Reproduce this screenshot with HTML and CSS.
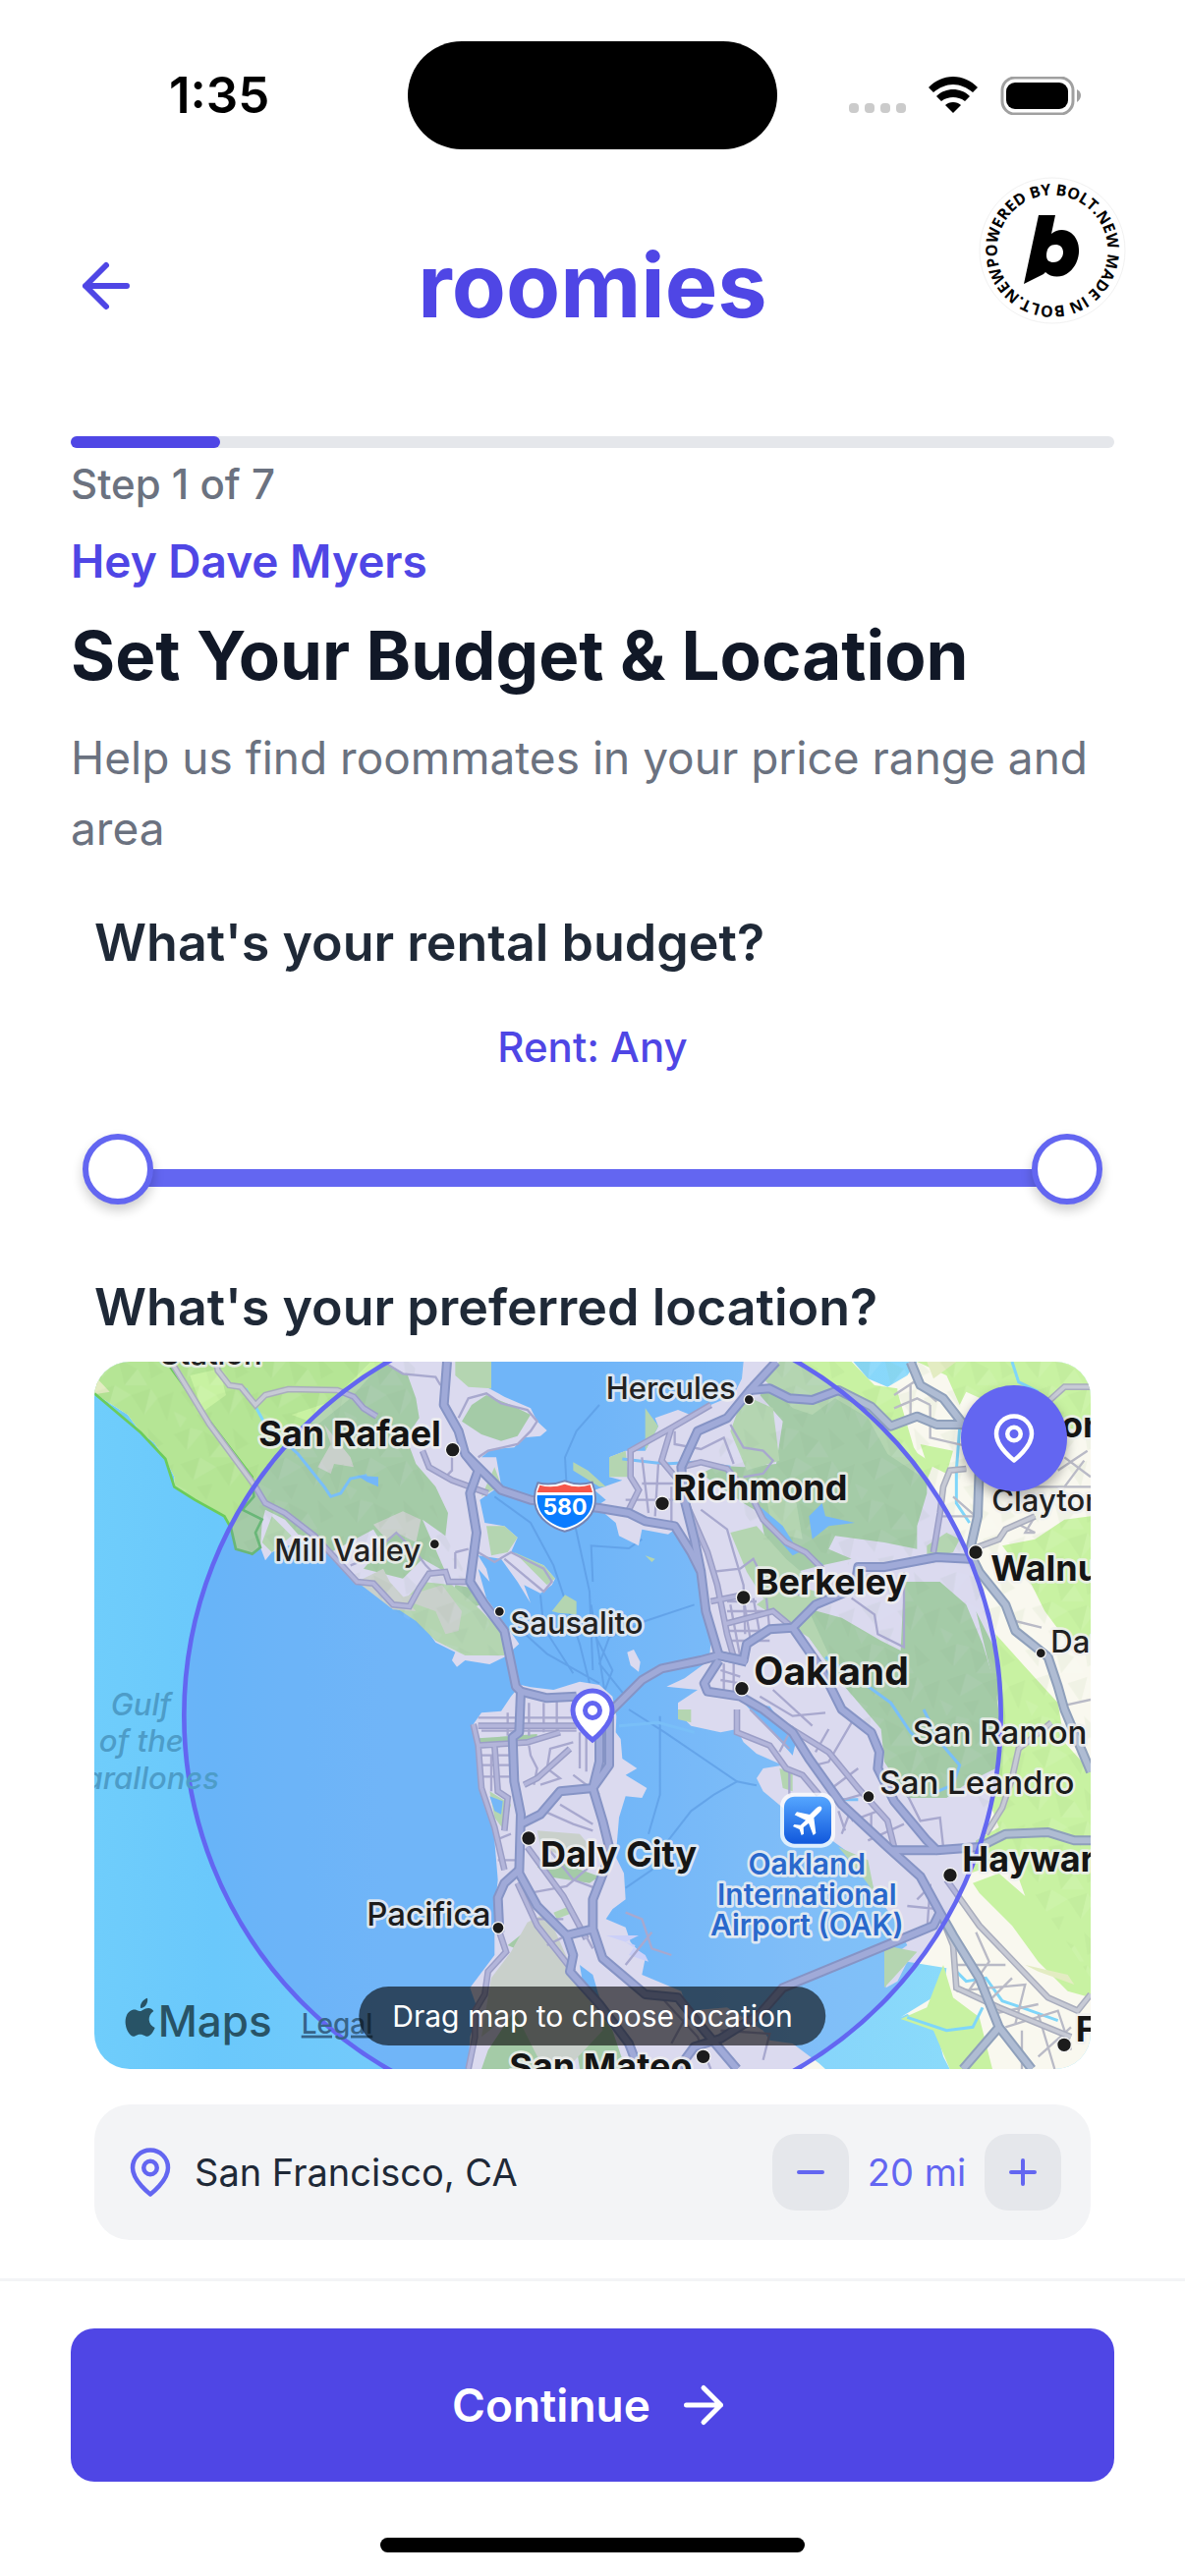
FILE: index.html
```html
<!DOCTYPE html>
<html lang="en">
<head>
    <meta charset="utf-8">
    <title>roomies</title>
    <link rel="stylesheet" href="styles.css">
</head>
<body>
    <div class="status-bar">
        <div class="time">1:35</div>
        <div class="island"></div>
        <div class="status-icons">
            <svg width="58" height="38" viewBox="0 0 58 38" fill="#cbcbcb">
                <rect x="0" y="27" width="10" height="10" rx="4"/>
                <rect x="16" y="27" width="10" height="10" rx="4"/>
                <rect x="32" y="27" width="10" height="10" rx="4"/>
                <rect x="48" y="27" width="10" height="10" rx="4"/>
            </svg>
            <svg width="52" height="38" viewBox="0 0 52 38" fill="#000">
                <path d="M26 0C36 0 44 4 51 11L46 16C40 11 33 8 26 8S12 11 6 16L1 11C8 4 16 0 26 0Z"/>
                <path d="M26 13C32 13 38 15 43 20L38 25C34 22 30 21 26 21S18 22 14 25L9 20C14 15 20 13 26 13Z"/>
                <path d="M26 26C29 26 32 27 34 29L26 37 18 29C20 27 23 26 26 26Z"/>
            </svg>
            <svg width="82" height="39" viewBox="0 0 82 39">
                <rect x="2" y="1" width="72" height="37" rx="13" fill="none" stroke="#a0a0a0" stroke-width="3"/>
                <rect x="6" y="6" width="63" height="27" rx="9" fill="#000"/>
                <path d="M78 13Q82 15 82 19T78 26Z" fill="#a0a0a0"/>
            </svg>
        </div>
    </div>

    <header class="header">
        <button class="back-button" aria-label="Back">
            <svg width="72" height="72" viewBox="0 0 24 24" fill="none" stroke="currentColor" stroke-width="2" stroke-linecap="round" stroke-linejoin="round">
                <path d="M12 19l-7-7 7-7M19 12H5"/>
            </svg>
        </button>
        <div class="logo">roomies</div>
        <a class="bolt-badge" href="#" aria-label="Powered by bolt.new">
            <svg width="150" height="150" viewBox="0 0 150 150">
                <circle cx="75" cy="75" r="74" fill="#fff" stroke="#f1f1f1"/>
                <path id="ring" fill="none" d="M21 91A56 56 0 1 1 129 59A56 56 0 1 1 21 91"/>
                <text class="bolt-text"><textPath href="#ring">POWERED BY BOLT.NEW MADE IN BOLT.NEW</textPath></text>
                <path d="M61 39H78L74 58C80 53 88 53 94 57C106 66 104 88 92 97C85 103 74 103 68 97L66 99 46 109ZM78 69C71 69 69 75 69 80C69 85 72 87 76 87C82 87 86 82 86 77C86 72 83 69 78 69Z" fill="#000" fill-rule="evenodd"/>
            </svg>
        </a>
    </header>

    <main class="content">
        <div class="progress"><div class="progress-fill"></div></div>
        <p class="step">Step 1 of 7</p>
        <p class="greeting">Hey Dave Myers</p>
        <h1 class="title">Set Your Budget &amp; Location</h1>
        <p class="subtitle">Help us find roommates in your price range and area</p>

        <section class="section">
            <h2 class="question">What's your rental budget?</h2>
            <p class="rent">Rent: Any</p>
            <div class="slider">
                <div class="slider-track"></div>
                <input type="range" class="slider-input" id="minRent" aria-label="Minimum rent" min="0" max="100" value="0">
                <input type="range" class="slider-input" id="maxRent" aria-label="Maximum rent" min="0" max="100" value="100">
            </div>

            <h2 class="question">What's your preferred location?</h2>
            <div class="map">
                <svg class="map-canvas" viewBox="18 18 3042 2160" preserveAspectRatio="xMidYMid slice">
                    <defs>
                        <linearGradient id="sea" x1="0" y1="0" x2="1" y2="0">
                            <stop offset="0" stop-color="#6fcdfb"/>
                            <stop offset=".12" stop-color="#6ac8fb"/>
                            <stop offset=".3" stop-color="#74cafb"/>
                            <stop offset=".5" stop-color="#74cafb"/>
                            <stop offset=".7" stop-color="#86d4fb"/>
                            <stop offset="1" stop-color="#8ee0fa"/>
                        </linearGradient>
                        <linearGradient id="air" x1="0" y1="0" x2="0" y2="1">
                            <stop offset="0" stop-color="#55a6ff"/>
                            <stop offset="1" stop-color="#1158dc"/>
                        </linearGradient>
                        <pattern id="relief" width="260" height="220" patternUnits="userSpaceOnUse">
                            <path d="M0 20L50 0 40 70ZM90 10L150 40 110 90ZM180 0L230 50 190 70ZM20 110L80 90 60 160ZM130 120L190 100 170 180ZM210 130L260 110 240 200ZM70 180L120 170 100 220Z" fill="#7fae6a" opacity=".07"/>
                            <path d="M50 0L90 10 40 70ZM150 40L180 90 110 90ZM80 90L130 120 60 160ZM190 100L210 130 170 180ZM0 170L40 190 20 220Z" fill="#fff" opacity=".08"/>
                        </pattern>
                        <path id="marin" d="M18 18V115L120 180 160 235 200 265 235 315 262 370V400L300 415 325 440 365 455 415 490 435 525 450 590 500 605 525 585 540 625 560 600 610 580 680 560 740 610 800 680 850 700 925 770 985 785 1020 820 1060 875 1120 905 1110 930 1125 950 1150 930 1225 942 1270 920 1315 880 1280 830 1215 740 1190 650 1225 690 1215 650 1190 610 1260 620 1310 690 1350 755 1330 700 1380 725 1415 700 1425 680 1390 640 1290 600 1310 555 1270 520 1210 510 1195 440 1260 395 1245 310 1200 310 1230 285 1300 280 1330 250 1380 245 1400 228 1370 200 1350 160 1270 125 1215 95 1160 90 1230 100V18Z"/>
                        <path id="peninsula" d="M1175 1125L1200 1090 1260 1085 1290 1040 1320 1005 1350 1012 1420 1020 1500 995 1560 1005 1600 1040 1612 1100 1610 1150 1625 1170 1630 1230 1675 1260 1640 1280 1705 1320 1690 1350 1640 1345 1620 1410 1610 1530 1635 1580 1640 1660 1600 1690 1580 1720 1640 1745 1655 1790 1700 1840 1690 1890 1810 1940 1830 2000 1950 1990 2060 2060 2080 2090 2150 2100 2230 2160 2250 2178H1160L1165 2080 1190 2000 1165 1930 1240 1830V1700L1250 1600 1240 1480 1225 1380 1200 1300 1190 1200Z"/>
                        <path id="eastbay" d="M2000 18L1995 70 1970 120 1900 150 1850 185 1800 165 1730 190 1740 215 1700 290 1640 290 1590 310V370L1630 380 1545 410 1580 440 1550 460 1610 510 1620 550 1680 580 1690 530 1770 545 1790 530 1860 640 1875 740 1900 880 1895 930 1820 985 1765 1010 1860 1020 1800 1060V1090L1840 1130 1930 1150 1980 1140 2000 1180 2040 1215 2120 1250 2060 1260 2040 1290 2060 1330 2120 1380 2270 1480 2380 1560 2400 1640 2460 1720 2500 1800 2430 1850 2435 1930 2470 1910 2500 1850 2620 1870 2610 1940 2480 2020 2500 2010 2590 2060 2610 2140 2630 2178H3060V18H2530L2500 60 2440 95 2380 70 2335 18Z"/>
                        <g id="highways" fill="none">
                            <path d="M1095 18L1085 150 1130 230 1150 300 1190 350 1165 420 1185 540 1165 690 1210 760 1270 840 1305 1010 1320 1025 1315 1150 1295 1165 1300 1300 1320 1400 1315 1580 1370 1680 1460 1770 1480 1830 1470 1880 1560 1980 1650 2100 1680 2178"/>
                            <path d="M1150 300L1260 410 1350 440 1560 465 1650 480 1700 505 1790 520 1840 600 1870 660 1885 780 1925 915"/>
                            <path d="M2100 18L2020 105 1950 190 1860 230 1810 340 1820 440 1850 560 1870 660"/>
                            <path d="M1570 1110L1690 990 1750 955 1870 930 1925 915 2010 935"/>
                            <path d="M1925 915L2000 930 2010 880 2080 835 2150 830 2240 960 2300 1080 2390 1150 2415 1210 2410 1260 2460 1360 2560 1480 2590 1510 2720 1500 2800 1460 2930 1455 3010 1480H3060"/>
                            <path d="M1925 930L1880 1000 1890 1025 1990 1040 2060 1080 2150 1150 2200 1230 2300 1370 2440 1500 2540 1590 2600 1700 2640 1770 2720 1900 2780 2050 2880 2178"/>
                            <path d="M2150 830L2220 760 2340 710 2350 645 2430 645 2590 615 2690 620M2450 1510H2590"/>
                            <path d="M2510 18L2540 90 2610 130 2680 220 2720 350 2715 490 2690 600 2720 660 2800 760 2830 840 2930 920 2960 1010 2980 1080 3060 1270"/>
                            <path d="M2020 105L2080 100 2140 130 2210 135 2290 105 2390 155 2450 215 2530 185 2590 210H2680"/>
                            <path d="M2600 1700L2580 1740 2460 1790 2120 1930 2050 2010 1930 2085 1850 2110 1800 2178"/>
                            <path d="M1320 1430L1380 1400 1440 1330 1540 1320 1560 1240V1110M1320 1025L1400 1045 1490 1040M1590 1100V1250L1540 1320 1570 1420 1595 1520 1540 1660V1750L1570 1840 1700 1950 1800 1960 1880 2060 1980 2178M1460 1770L1540 1750"/>
                            <path d="M2780 2050L2670 2178M1315 1570L1270 1610 1250 1655 1255 1760"/>
                        </g>
                        <g id="roads" fill="none">
                            <path d="M260 30L370 210 510 400 540 450 600 480 690 550 820 690 870 695 930 760 980 765 1010 710 1040 665 1090 660 1100 690 1165 690"/>
                            <path d="M390 18L395 45 430 90 465 95 510 150 540 120 610 102 760 105 810 125 840 160 880 185"/>
                            <path d="M1020 290L1040 340 1110 380 1220 420M1255 1760L1275 1820 1220 1880 1210 1950 1180 2000V2080L1160 2178"/>
                            <path d="M1900 150L1780 220 1655 290V370L1680 410 1640 490M1810 340L1870 325 1950 345 2030 440 2060 500 2130 570 2190 600 2240 650"/>
                            <path d="M1780 220L1750 320 1800 380M1820 440L1890 600 1920 700 1950 850 1970 920M1900 750L2000 730M1940 820L2090 780 2150 830"/>
                            <path d="M2680 345L2630 350 2610 400 2600 480 2580 600M2700 590L2780 560 2800 530 2890 490M3060 95H2980L2930 140"/>
                            <path d="M2740 1460L2790 1380 2820 1290 2840 1200 2940 1120M2620 1600L2720 1740 2930 1960 3020 2000 3060 1950"/>
                            <path d="M1175 1125L1190 1190 1200 1320 1240 1440 1270 1570M1240 1190L1250 1330 1280 1350 1270 1450M1190 1130H1490M1190 1190L1340 1180 1440 1150M1330 1310L1370 1290 1470 1200"/>
                            <path d="M1980 1080V1150L2080 1190 2130 1260 2180 1280 2230 1340M2130 1130L2260 1210 2350 1320 2440 1420 2460 1500"/>
                            <path d="M1340 1500L1450 1650 1520 1780M1310 1610L1370 1740 1480 1880M2600 1700L2640 1800 2650 1930 2780 1990 3000 2080"/>
                        </g>
                        <g id="streets" fill="none">
                            <path d="M900 18L960 55 1060 65 1075 90M1110 300V350L1090 370M1130 190L1160 130 1215 115 1260 145 1340 165 1370 200 1350 230 1310 270 1220 290 1190 310M1190 600L1240 630 1290 600 1390 650 1415 690 1390 720 1330 670 1270 620M800 640L850 620 940 540 1000 600 1030 640 1050 660M1120 600L1160 590M1120 600V650"/>
                            <path d="M1190 1105H1480M1200 1145H1490M1190 1220H1300M1195 1250H1300M1200 1285H1300M1280 1090V1160M1345 1060V1160M1390 1060V1150M1430 1040V1150M1500 1150V1260M1520 1150V1270M1345 1190L1350 1220 1370 1260 1360 1310M1480 1180L1410 1200 1400 1260 1440 1290 1380 1310M1230 1220V1330"/>
                            <path d="M1240 1480L1290 1460M1250 1540H1310M1390 1390L1480 1430 1540 1450M1400 1500L1480 1600 1560 1630M1350 1640L1460 1620 1530 1560M1360 1720L1450 1720M1400 1800L1480 1760M1480 1280L1560 1340M1440 1370L1540 1430M1480 1700L1540 1810"/>
                            <path d="M1690 310L1710 480M1740 330L1730 490M1780 400V510M1640 440H1800M1690 390H1790M1960 210L2000 280 2060 290 2090 320 2060 360 2000 370M1790 230V270L1870 285 1940 250 1970 330M1870 470L1950 530 1970 600 2000 700 2005 850M1900 660L1990 650 2030 620 2060 680 2170 730"/>
                            <path d="M1950 750H2040M1950 780H2060M1940 840H2100M1950 870H2080M1960 760L1990 920M2000 740L2020 860M2030 740L2050 850M2070 740L2080 840M1930 960L1990 980M1930 990L1990 1000M1940 940V1030M1970 940V1030M2330 740L2400 790 2410 850 2490 890V660"/>
                            <path d="M2020 1080L2140 1200M2050 1040L2150 1100 2250 1090M2090 1020L2210 1130M2150 1130L2110 1210M2260 1140L2220 1210M2330 1120L2260 1240 2220 1250M2350 1260L2270 1320M2290 1360L2360 1340M2330 1420L2410 1390M2380 1480L2490 1430M2140 1270V1340M2500 1340L2540 1420 2600 1410 2610 1500M2390 1400V1470M2290 1390L2310 1450M2300 1460L2330 1380"/>
                            <path d="M2460 120L2520 80 2590 140M2460 160L2530 130 2570 150M2570 150V250L2700 280M2510 90V180M2640 430L2720 500M2600 490L2700 490M2890 490L2860 540H2890L2830 510M2980 310L3060 370M2960 350L3050 290M2980 400L3040 320M2850 400L3060 400M2830 810L2910 830M2970 1070L3060 1050"/>
                            <path d="M2530 1660L2570 1620 2560 1760M2500 1680L2600 1690M2640 1860H2800M2710 1760L2750 1850 2680 1950M2820 1900L2760 1960M2650 1940L2860 1920 2830 2040M2760 2010L2900 1980M2800 2050L2960 2000 3000 2120M2850 2060V2178M2900 2010L2950 2178M3000 2050L2900 2140"/>
                            <path d="M1640 1700L1690 1720 1720 1810 1780 1830M1720 1760L1640 1860M1750 1960L1860 2080 1900 2178M1840 1990L1780 2100M1930 2060L2080 2070 2060 2150"/>
                        </g>
                    </defs>

                    <rect x="18" y="18" width="3042" height="2160" fill="url(#sea)"/>

                    <g class="ferry-lines">
                        <path d="M1560 150L1490 230 1455 310 1460 400 1530 720 1540 960M1240 430L1350 510 1420 640 1500 880 1530 1000M1380 730L1390 830 1480 970M1300 820L1400 910 1560 1000"/>
                        <path d="M1540 690L1535 580 1650 588 1690 560M1850 760L1700 810 1590 860 1560 940 1640 1040M1550 860L1600 960 1570 1040M1535 760L1580 1050M1650 1080L1760 1150 1980 1300 2040 1312M1980 1300L1910 1340 1840 1390 1770 1480 1720 1570 1640 1625M1745 1100V1340L1710 1460"/>
                    </g>

                    <g fill="#f9f8ef">
                        <use href="#marin"/>
                        <use href="#peninsula"/>
                        <use href="#eastbay"/>
                        <path d="M1645 905L1665 897 1685 935 1680 965 1655 945Z"/>
                        <path d="M1580 1770L1670 1800 1650 1830 1710 1850 1700 1830 1640 1790 1680 1770Z" fill="#e6ecfb"/>
                    </g>

                    <!-- parks and hills -->
                    <g fill="#b5e595">
                        <path d="M18 18V115L120 180 160 235 200 265 235 315 262 370V400L325 440 415 490 435 525 450 590 500 605 525 585 530 510 540 470 600 500 640 545 680 555 740 600 870 530 900 580 840 650 960 680 1020 620 1090 660 1020 500 1090 550 1098 480 1060 400 1000 330 970 250 1010 190 1000 130 975 60 900 18Z"/>
                        <path d="M1215 120L1290 150 1350 180 1310 245 1260 260 1200 240 1140 200 1170 150ZM1120 700L1180 710 1200 760 1130 780 1110 740Z"/>
                        <path d="M2110 60L2200 110 2330 90 2400 150 2460 240 2560 340 2560 420 2530 520 2530 590 2430 570 2280 550 2260 590 2330 620 2240 640 2160 660 2070 580 2050 480 2000 450 1870 360 1920 335 2000 340 2100 330 2120 200 2050 120Z"/>
                        <path d="M2190 770L2300 800 2420 870 2480 900 2490 690 2600 690 2680 760 2730 880 2770 1010 2790 1180 2770 1260 2690 1300 2620 1350 2500 1350 2430 1240 2420 1140 2300 1000 2200 860Z"/>
                        <path d="M1190 1168L1370 1155V1172L1195 1188ZM1370 1560L1450 1550 1560 1590 1530 1610 1400 1590ZM1280 1800L1330 1760 1390 1800 1350 1830ZM1200 2178L1220 2120 1300 2000 1340 2030 1390 2178ZM1520 1950L1600 2060 1640 2178 1500 2178 1480 2040Z"/>
                        <path d="M2710 780L2780 920 2810 1080 2900 1180 2880 1400 2760 1330 2800 1150ZM2900 1640L2980 1680 3060 1800V1900L2930 1800Z"/>
                    </g>
                    <g fill="#c8f2a2">
                        <path d="M2060 70L2110 18 2330 18 2400 90 2470 100 2475 260 2580 330 2560 380 2440 300 2380 190 2280 130 2210 180 2150 160ZM2000 120L2090 160 2110 320 2010 350 1960 230ZM2060 380L2160 440 2180 560 2090 540ZM1960 540L2040 520 2130 620 2200 680 2180 740 2120 760 2060 740 2010 660Z"/>
                        <path d="M2470 110L2520 280 2570 360 2500 330 2450 220ZM2540 270L2640 290 2620 360 2560 330ZM2560 620L2640 600 2660 560 2620 540 2560 580Z"/>
                        <path d="M2530 18L2620 60 2660 150 2680 110 2790 160 2900 210 3060 230V18ZM2790 580L2890 560 2980 500 3060 490V880L2980 860 2920 780 2880 700Z"/>
                        <path d="M2770 850L2860 950 2960 1060 2980 1180 3060 1270V1960L2990 1940 2900 1850 2820 1740 2720 1640 2700 1610 2780 1580 2860 1650 2820 1540 2690 1580 2710 1480 2780 1440 2750 1360 2790 1280 2800 1100Z"/>
                        <path d="M940 770L1020 690 1110 700 1180 760 1260 840 1270 915 1150 915 1060 870 1000 810ZM1215 520L1270 520 1310 555 1280 600 1230 610ZM1240 340L1260 395 1200 430ZM1300 600L1390 640 1425 680 1400 700ZM560 490L620 550 560 600 530 570Z"/>
                        <path d="M310 60L400 40 420 120 350 170ZM620 180L740 140 860 20 900 18 800 130 700 210ZM1120 18H1230V100L1160 95 1120 60ZM1590 310L1640 290 1650 370 1590 370ZM1700 160L1740 215 1700 290ZM2040 760L2130 690 2250 730 2200 780 2300 1000 2200 860Z"/>
                        <path d="M1225 1330L1290 1370 1270 1450 1240 1410ZM1420 1700L1470 1680 1480 1700 1430 1720ZM1800 1080H1840V1120L1800 1110ZM2110 1260L2150 1270V1330L2120 1320ZM2290 1500L2380 1540 2400 1640 2340 1560ZM2430 1800L2530 1820 2430 1930ZM2610 1860L2640 1960 2720 2020 2760 2178H2630L2580 2060 2480 2025 2560 1990ZM1480 325L1525 350 1580 400 1560 400 1480 350ZM1415 780L1455 730 1490 750V790L1435 785ZM1700 610L1730 620 1720 630Z"/>
                    </g>
                    <g fill="#e3ecc2">
                        <path d="M870 515L960 475 1015 500 1000 570 940 540 910 560ZM700 340L740 270 720 210 800 310 810 340 750 330 740 360ZM950 740L1080 700 1140 780 1130 840 1090 850 1060 780ZM18 60L65 110 18 118ZM820 690L900 650 920 690 1000 780 930 775Z"/>
                        <path d="M1290 1820L1340 1730 1400 1700 1480 1880 1560 1950 1570 2060 1460 2178H1390L1300 2000 1200 2080 1230 1900ZM1370 1450L1500 1460 1550 1520 1480 1540 1380 1500ZM2560 18H2650L2580 70ZM2860 1860L2990 1890 3010 1920 2900 1880Z"/>
                    </g>
                    <g fill="url(#relief)">
                        <path d="M18 18V115L235 315 262 400 415 490 500 605 740 610 925 770 1120 905 1270 920 1180 720 1090 550 970 250 1000 18Z"/>
                        <path d="M2060 18L1960 220 1900 340 2060 560 2330 620 2190 770 2430 1240 2500 1350 2690 1300 2820 1540 3060 1900V18Z"/>
                    </g>

                    <!-- lakes and creeks -->
                    <g fill="none" stroke="#7fd6fa" stroke-width="9">
                        <path d="M480 100L540 210 640 300 720 400 740 430 770 420 800 375 850 365M1630 315L1760 330 1850 325 1960 340M2190 600L2240 640M2250 920L2340 980 2450 1060 2510 1150 2530 1170M2550 1080L2600 1180 2660 1250 2640 1310 2570 1340M2820 18L2840 80 2900 110M2660 220L2650 350 2650 450 2690 510M2640 1870L2680 1910 2740 1900 2790 1970 2850 1990 2960 2030M2500 2020L2620 2060 2700 2050 2730 1990M1620 1130L1740 1120 1850 1150M2280 1355H2350"/>
                    </g>
                    <path d="M820 365L885 370 885 400 850 385ZM2050 460L2120 520 2170 600 2150 610 2080 530ZM2200 490L2240 450 2250 490 2340 510 2260 520 2210 560ZM1225 1345L1265 1360 1260 1400 1240 1390ZM2000 1060L2080 1070 2160 1180 2150 1220 2060 1120ZM1500 1860L1540 1890 1560 1960 1510 1920Z" fill="#78ccfb"/>
                    <path d="M250 35L370 200 500 370 505 430 470 470 530 500 510 540 525 585 500 605 450 590 435 525 415 490 325 440 262 400 235 315 160 235 18 115" fill="none" stroke="#6bcc5a" stroke-width="8"/>

                    <use href="#streets" stroke="#b9bac6" stroke-width="7"/>
                    <use href="#roads" stroke="#a9adbd" stroke-width="20"/>
                    <use href="#roads" stroke="#c7cad5" stroke-width="11"/>
                    <use href="#highways" stroke="#8fa0bb" stroke-width="30" stroke-linejoin="round"/>
                    <use href="#highways" stroke="#afbcd3" stroke-width="18" stroke-linejoin="round"/>

                    <!-- search radius -->
                    <circle cx="1539" cy="1098" r="1247" fill="#6366f1" fill-opacity=".2" stroke="#6366f1" stroke-width="14"/>

                    <g class="sea-label">
                        <text x="68" y="1098">Gulf</text>
                        <text x="32" y="1210">of the</text>
                        <text x="-65" y="1323">Farallones</text>
                    </g>

                    <g class="dots">
                        <circle cx="1112" cy="287" r="22"/>
                        <circle cx="1752" cy="451" r="22"/>
                        <circle cx="2000" cy="738" r="22"/>
                        <circle cx="1995" cy="1016" r="22"/>
                        <circle cx="2709" cy="600" r="22"/>
                        <circle cx="1344" cy="1473" r="22"/>
                        <circle cx="2631" cy="1586" r="22"/>
                        <circle cx="2979" cy="2104" r="22"/>
                        <circle cx="1877" cy="2140" r="22"/>
                        <circle cx="1057" cy="575" r="15"/>
                        <circle cx="1255" cy="781" r="15"/>
                        <circle cx="2017" cy="134" r="15"/>
                        <circle cx="2908" cy="908" r="15"/>
                        <circle cx="2382" cy="1346" r="18"/>
                        <circle cx="1251" cy="1747" r="18"/>
                    </g>
                    <g class="city">
                        <text x="520" y="275">San Rafael</text>
                        <text x="1786" y="440">Richmond</text>
                        <text x="2036" y="728">Berkeley</text>
                        <text x="2032" y="1006" class="big">Oakland</text>
                        <text x="2755" y="688">Walnut Creek</text>
                        <text x="2890" y="248">Concord</text>
                        <text x="1380" y="1560">Daly City</text>
                        <text x="2668" y="1574">Hayward</text>
                        <text x="3014" y="2094">Fremont</text>
                        <text x="1285" y="2208">San Mateo</text>
                    </g>
                    <g class="town">
                        <text x="218" y="26">Station</text>
                        <text x="568" y="628">Mill Valley</text>
                        <text x="1288" y="850">Sausalito</text>
                        <text x="1580" y="133">Hercules</text>
                        <text x="2758" y="474">Clayton</text>
                        <text x="2938" y="905">Danville</text>
                    </g>
                    <g class="suburb">
                        <text x="850" y="1740">Pacifica</text>
                        <text x="2516" y="1186">San Ramon</text>
                        <text x="2416" y="1339">San Leandro</text>
                    </g>

                    <!-- interstate shield -->
                    <path d="M1372 388Q1412 398 1454 382Q1496 398 1538 386Q1552 420 1546 456C1538 500 1490 528 1454 536C1420 528 1370 500 1363 450Q1358 420 1372 388Z" fill="#fff" stroke="#7585b5" stroke-width="6"/>
                    <path d="M1378 395Q1414 406 1454 392Q1494 406 1532 394L1539 417H1370Z" fill="#f6564a"/>
                    <path d="M1370 426H1539C1546 486 1496 516 1454 526C1412 516 1366 486 1370 426Z" fill="#0a7cff"/>
                    <text x="1455" y="485" class="shield">580</text>

                    <!-- airport -->
                    <rect x="2112" y="1334" width="168" height="168" rx="42" fill="#fff" opacity=".75"/>
                    <rect x="2124" y="1346" width="144" height="144" rx="32" fill="url(#air)"/>
                    <path d="M2237 1377Q2243 1383 2232 1394L2215 1411 2221 1458 2213 1464 2199 1427 2183 1440 2184 1460 2177 1464 2171 1446 2151 1437 2155 1431 2174 1433 2190 1418 2156 1402 2163 1393 2202 1401 2221 1382Q2232 1373 2237 1377Z" fill="#fff"/>
                    <g class="airport">
                        <text x="2194" y="1584">Oakland</text>
                        <text x="2194" y="1678">International</text>
                        <text x="2194" y="1771">Airport (OAK)</text>
                    </g>

                    <!-- attribution -->
                    <g fill="#285366">
                        <path d="M180 1970C183 1984 174 2000 159 2001C157 1986 168 1974 180 1970ZM158 2010C165 2010 171 2000 184 2001C190 2001 195 2004 199 2010C178 2024 182 2052 203 2061C197 2075 190 2086 180 2087C171 2087 169 2081 158 2081S145 2087 137 2087C122 2085 106 2050 116 2025C121 2010 137 2002 147 2007C151 2009 154 2010 158 2010Z" transform="translate(0 -9)"/>
                        <text x="212" y="2080" class="maps">Maps</text>
                    </g>
                    <text x="650" y="2069" class="legal">Legal</text>
                </svg>
                <svg class="map-pin" width="60" height="60" viewBox="0 0 24 24" fill="#fff" stroke="#6366f1" stroke-width="2">
                    <path d="M20 10c0 6-8 12-8 12s-8-6-8-12a8 8 0 0 1 16 0Z"/>
                    <circle cx="12" cy="10" r="3"/>
                </svg>
                <button class="locate-button" aria-label="Use my location">
                    <svg width="54" height="54" viewBox="0 0 24 24" fill="none" stroke="currentColor" stroke-width="2" stroke-linejoin="round">
                        <path d="M20 10c0 6-8 12-8 12s-8-6-8-12a8 8 0 0 1 16 0Z"/>
                        <circle cx="12" cy="10" r="3"/>
                    </svg>
                </button>
                <div class="map-hint">Drag map to choose location</div>
            </div>

            <div class="location-bar">
                <svg class="location-icon" width="54" height="54" viewBox="0 0 24 24" fill="none" stroke="currentColor" stroke-width="2" stroke-linejoin="round">
                    <path d="M20 10c0 6-8 12-8 12s-8-6-8-12a8 8 0 0 1 16 0Z"/>
                    <circle cx="12" cy="10" r="3"/>
                </svg>
                <span class="location-name">San Francisco, CA</span>
                <button class="radius-button" aria-label="Decrease radius">
                    <svg width="48" height="48" viewBox="0 0 24 24" stroke="currentColor" stroke-width="2" stroke-linecap="round"><path d="M6 12H18"/></svg>
                </button>
                <span class="radius-value">20 mi</span>
                <button class="radius-button" aria-label="Increase radius">
                    <svg width="48" height="48" viewBox="0 0 24 24" stroke="currentColor" stroke-width="2" stroke-linecap="round"><path d="M6 12H18M12 6V18"/></svg>
                </button>
            </div>
        </section>
    </main>

    <footer class="footer">
        <button class="continue-button">
            Continue
            <svg width="60" height="60" viewBox="0 0 24 24" fill="none" stroke="currentColor" stroke-width="2" stroke-linecap="round" stroke-linejoin="round">
                <path d="M5 12h14M12 5l7 7-7 7"/>
            </svg>
        </button>
        <div class="home-indicator"></div>
    </footer>
</body>
</html>
```
FILE: styles.css
```css
* {
    box-sizing: border-box;
}
body {
    font-family: Inter, "Liberation Sans", sans-serif;
    background-color: #fff;
    color: #111827;
    margin: 0;
}
h1, h2, p {
    margin: 0;
}
button {
    font-family: inherit;
    border: none;
    padding: 0;
    cursor: pointer;
}
svg {
    display: block;
    flex: none;
}
.status-bar {
    display: grid;
    grid-template-columns: 1fr 376px 1fr;
    align-items: center;
    height: 152px;
    padding-top: 42px;
}
.time {
    font-size: 51px;
    line-height: 60px;
    font-weight: 600;
    color: #000;
    padding-left: 172px;
}
.island {
    height: 110px;
    border-radius: 55px;
    background-color: #000;
}
.status-icons {
    display: flex;
    justify-content: flex-end;
    gap: 22px;
    padding-right: 106px;
}
.header {
    display: flex;
    justify-content: space-between;
    align-items: center;
    position: relative;
    height: 292px;
    padding: 0 72px 14px;
}
.back-button {
    background: none;
    color: #4f46e5;
}
.logo {
    position: absolute;
    left: 0;
    right: 0;
    text-align: center;
    pointer-events: none;
    font-size: 90px;
    line-height: 110px;
    font-weight: 700;
    color: #4f46e5;
}
.bolt-badge {
    position: absolute;
    top: 28px;
    right: 60px;
}
.bolt-text {
    font-family: "Open Sans", sans-serif;
    font-size: 16px;
    font-weight: 700;
    fill: #000;
}
.content {
    padding: 0 72px;
}
.progress {
    height: 12px;
    border-radius: 6px;
    background-color: #e5e7eb;
}
.progress-fill {
    width: calc(100% / 7);
    height: 12px;
    border-radius: 6px;
    background-color: #4f46e5;
}
.step {
    margin-top: 12px;
    font-size: 42px;
    line-height: 50px;
    font-weight: 500;
    color: #6b7280;
}
.greeting {
    margin-top: 24px;
    font-size: 46px;
    line-height: 58px;
    font-weight: 600;
    color: #4f46e5;
}
.title {
    margin-top: 24px;
    font-size: 69px;
    line-height: 87px;
    font-weight: 700;
}
.subtitle {
    margin-top: 24px;
    font-size: 46px;
    line-height: 72px;
    color: #6b7280;
}
.section {
    padding: 0 24px;
}
.question {
    margin-top: 48px;
    font-size: 52px;
    line-height: 66px;
    font-weight: 600;
    color: #1f2937;
}
.rent {
    margin-top: 48px;
    text-align: center;
    font-size: 42px;
    line-height: 50px;
    font-weight: 500;
    color: #4f46e5;
}
.slider {
    display: grid;
    margin: 63px -12px 0;
    padding-bottom: 24px;
}
.slider-track,
.slider-input {
    grid-area: 1 / 1;
}
.slider-track {
    height: 18px;
    margin: 36px 36px 0;
    background-color: #6366f1;
}
.slider-input {
    appearance: none;
    width: 100%;
    height: 72px;
    margin: 0;
    background: none;
    pointer-events: none;
}
.slider-input::-webkit-slider-thumb {
    appearance: none;
    width: 72px;
    height: 72px;
    border: 6px solid #6366f1;
    border-radius: 50%;
    background-color: #fff;
    box-shadow: 0 6px 12px rgba(0, 0, 0, 0.2);
    pointer-events: auto;
}
.map {
    position: relative;
    height: 720px;
    margin-top: 22px;
    border-radius: 36px;
    overflow: hidden;
}
.map-canvas {
    width: 100%;
    height: 100%;
}
.ferry-lines {
    fill: none;
    stroke: #5aa9e0;
    stroke-width: 6;
    opacity: 0.7;
}
.map-canvas text {
    paint-order: stroke;
    stroke: #f0f0f0;
    stroke-opacity: 0.85;
    stroke-width: 16;
    stroke-linejoin: round;
}
.dots {
    fill: #1c1c1c;
    stroke: #f4f4f4;
    stroke-width: 4;
}
.city {
    font-size: 108px;
    font-weight: 700;
    fill: #151515;
}
.city .big {
    font-size: 117px;
}
.town {
    font-size: 93px;
    font-weight: 500;
    fill: #222;
}
.suburb {
    font-size: 99px;
    font-weight: 500;
    fill: #1c1c1c;
}
.airport {
    font-size: 90px;
    font-weight: 600;
    fill: #2968cc;
    text-anchor: middle;
}
.map-canvas .sea-label text {
    font-size: 93px;
    font-weight: 500;
    font-style: italic;
    fill: #4d9cc8;
    stroke: none;
}
.map-canvas .shield {
    font-size: 69px;
    font-weight: 700;
    fill: #fff;
    text-anchor: middle;
    stroke: none;
}
.map-canvas .maps {
    font-size: 132px;
    font-weight: 500;
    stroke: none;
}
.map-canvas .legal {
    font-size: 84px;
    font-weight: 500;
    fill: #376489;
    text-decoration: underline;
    stroke: none;
}
.map-pin {
    position: absolute;
    left: calc(50% - 30px);
    top: calc(50% - 30px);
}
.locate-button {
    position: absolute;
    top: 24px;
    right: 24px;
    display: flex;
    align-items: center;
    justify-content: center;
    width: 108px;
    height: 108px;
    border-radius: 50%;
    background-color: #6366f1;
    color: #fff;
    box-shadow: 0 6px 12px rgba(0, 0, 0, 0.3);
}
.map-hint {
    position: absolute;
    left: 50%;
    bottom: 24px;
    transform: translateX(-50%);
    padding: 0 34px;
    border-radius: 30px;
    background-color: rgba(0, 0, 0, 0.6);
    color: #fff;
    font-size: 30px;
    line-height: 60px;
    white-space: nowrap;
}
.location-bar {
    display: flex;
    align-items: center;
    margin-top: 36px;
    padding: 30px;
    border-radius: 36px;
    background-color: #f3f4f6;
}
.location-icon {
    color: #6366f1;
}
.location-name {
    flex: 1;
    margin-left: 18px;
    font-size: 38px;
    line-height: 48px;
    color: #1f2937;
}
.radius-button {
    display: flex;
    align-items: center;
    justify-content: center;
    width: 78px;
    height: 78px;
    border-radius: 24px;
    background-color: #e5e7eb;
    color: #6366f1;
}
.radius-value {
    width: 138px;
    text-align: center;
    font-size: 38px;
    line-height: 48px;
    color: #6366f1;
}
.footer {
    margin-top: 39px;
    padding: 48px 72px 24px;
    border-top: 3px solid #f3f4f6;
}
.continue-button {
    display: flex;
    align-items: center;
    justify-content: center;
    gap: 24px;
    width: 100%;
    height: 156px;
    border-radius: 24px;
    background-color: #4f46e5;
    color: #fff;
    font-size: 46px;
    font-weight: 600;
}
.home-indicator {
    width: 432px;
    height: 15px;
    margin: 57px auto 0;
    border-radius: 8px;
    background-color: #000;
}
```
